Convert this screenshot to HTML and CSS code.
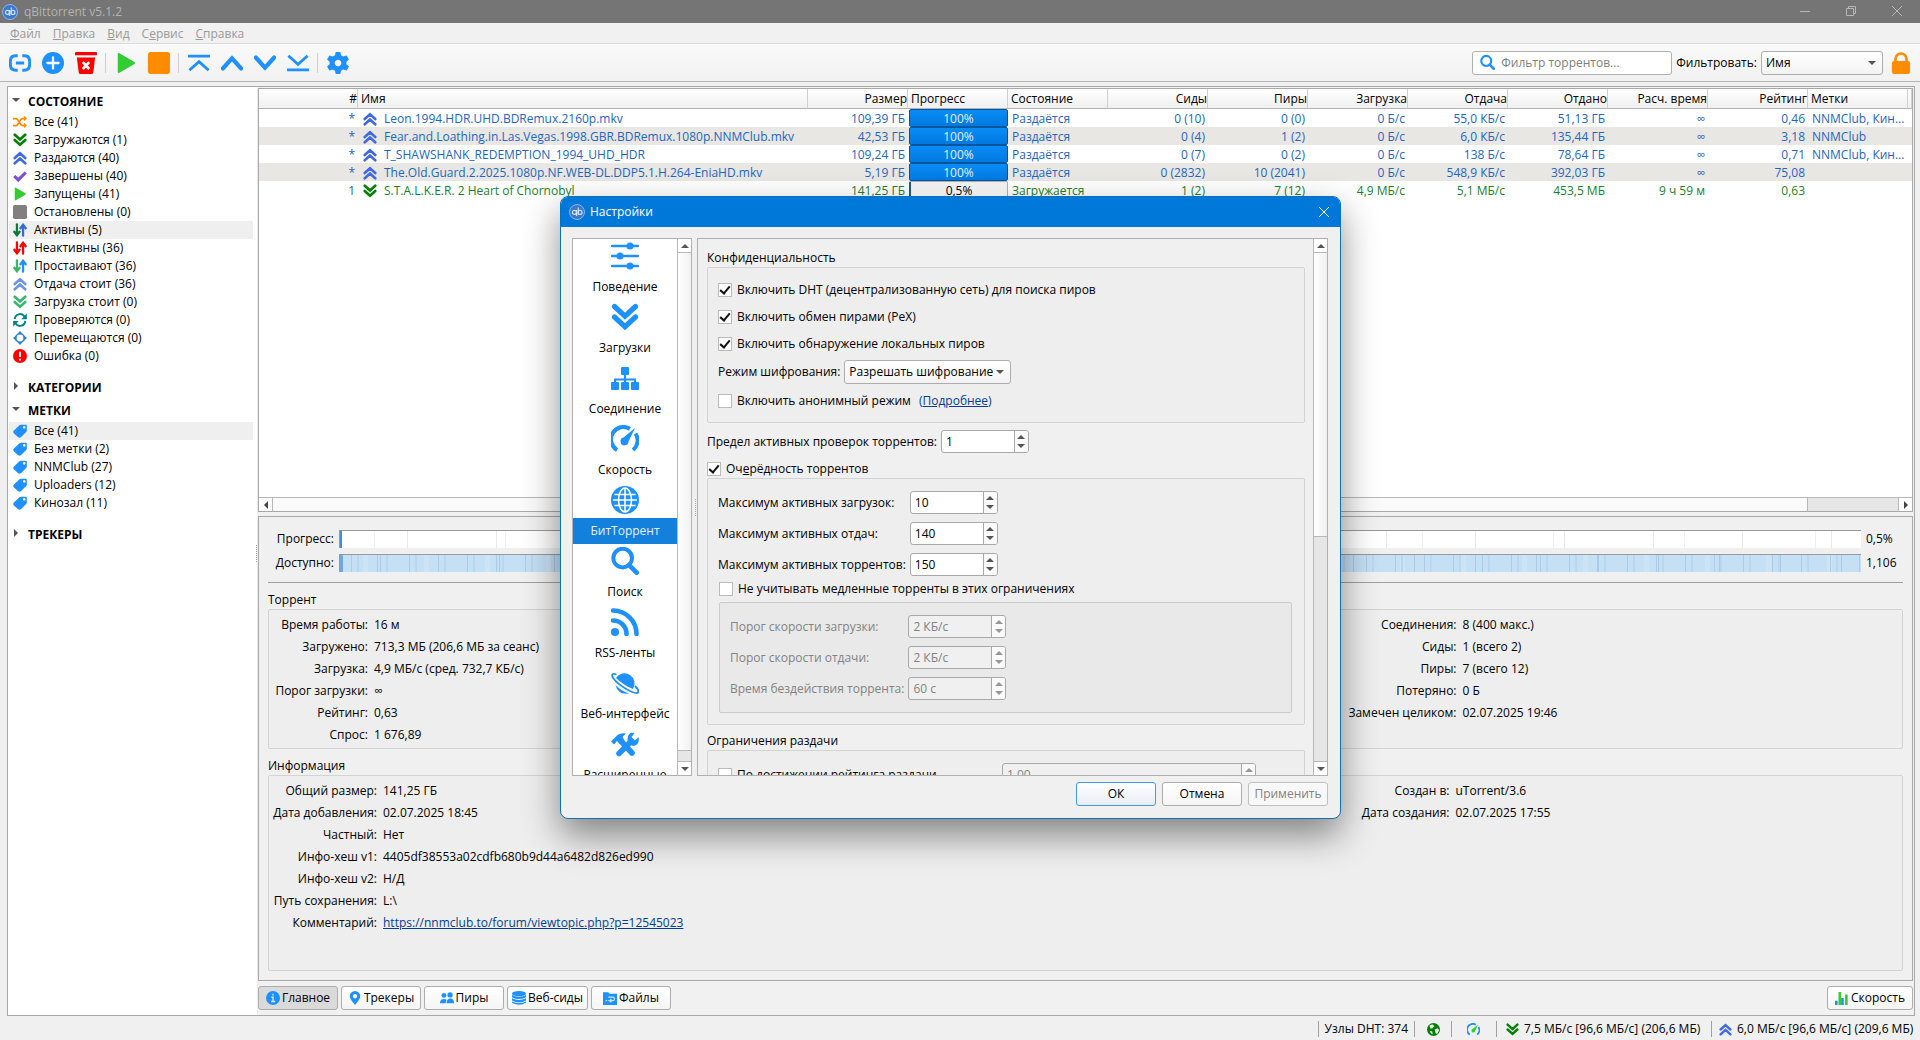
FILE: index.html
```html
<!DOCTYPE html>
<html lang="ru">
<head>
    <meta charset="UTF-8">
    <meta name="viewport" content="width=device-width, initial-scale=1.0">
    <title>qBittorrent v5.1.2</title>
    <link rel="stylesheet" href="styles.css">
</head>
<body>
    <!-- Icon sprite -->
    <svg class="sprite" aria-hidden="true">
        <symbol id="i-logo" viewBox="0 0 16 16"><circle cx="8" cy="8" r="7.5" fill="#3b78d0" stroke="#8fb6ea"/><circle cx="5.4" cy="8.4" r="2" fill="none" stroke="#cfe2fa" stroke-width="1.2"/><path d="M7.6 6v6M9.3 3.6v6.6" stroke="#cfe2fa" stroke-width="1.2"/><circle cx="11" cy="8.4" r="2" fill="none" stroke="#cfe2fa" stroke-width="1.2"/></symbol>
        <symbol id="i-up2" viewBox="0 0 16 16"><path d="M2 8l6-5.500 6 5.500M2 14l6-5.500 6 5.500" fill="none" stroke="currentColor" stroke-width="3" stroke-linecap="round"/></symbol>
        <symbol id="i-down2" viewBox="0 0 16 16"><path d="M2 2l6 5.500L14 2M2 8l6 5.500L14 8" fill="none" stroke="currentColor" stroke-width="3" stroke-linecap="round"/></symbol>
        <symbol id="i-play" viewBox="0 0 16 16"><path d="M2 1.500q0-1.200 1.200-.6l11 6.300q1 .8 0 1.600l-11 6.300Q2 15.700 2 14.500z" fill="#32cd32"/></symbol>
        <symbol id="i-stop" viewBox="0 0 16 16"><rect width="16" height="16" rx="2" fill="currentColor"/></symbol>
        <symbol id="i-check" viewBox="0 0 16 16"><path d="M1.500 8l4.500 4.500L14.500 4" fill="none" stroke="#7b52d3" stroke-width="3.600"/></symbol>
        <symbol id="i-shuffle" viewBox="0 0 16 16"><path d="M0 4h3.500c3 0 4 8 7.500 8h2M0 12h3.500c1.300 0 2.200-1.300 3-3M7.800 7C8.600 5.300 9.600 4 11 4h2" fill="none" stroke="#ff8c00" stroke-width="2"/><path d="M12.500.8L16 4l-3.500 3.200zM12.500 8.800L16 12l-3.500 3.200z" fill="#ff8c00"/></symbol>
        <symbol id="i-updown" viewBox="0 0 16 16"><path class="a" d="M4.500 1.500V13M1.500 10l3 4 3-4" fill="none" stroke-width="2.600" stroke-linecap="round"/><path class="b" d="M11.500 14.500V3M8.500 6l3-4 3 4" fill="none" stroke-width="2.600" stroke-linecap="round"/></symbol>
        <symbol id="i-sync" viewBox="0 0 16 16"><path d="M2 7a6 6 0 0 1 11-3M14 9a6 6 0 0 1-11 3" fill="none" stroke="#008080" stroke-width="2.200"/><path d="M15.800.5v6.500H9.500zM.2 15.500V9h6.300z" fill="#008080"/></symbol>
        <symbol id="i-move" viewBox="0 0 16 16"><circle cx="8" cy="8" r="4.800" fill="none" stroke="#2a7fd4" stroke-width="1.800"/><path d="M8 0l3 3.500H5zM8 16l-3-3.500h6zM0 8l3.500-3v6zM16 8l-3.500 3V5z" fill="#2a7fd4"/></symbol>
        <symbol id="i-error" viewBox="0 0 16 16"><circle cx="8" cy="8" r="8" fill="#f00"/><path d="M8 3.200v5.800M8 11v2.200" stroke="#fff" stroke-width="2.200"/></symbol>
        <symbol id="i-tag" viewBox="0 0 16 16"><path fill-rule="evenodd" d="M9 .8h5.800q1 0 1 1V7.500q0 1-1 2L9 15.200q-1.500 1-3 0L.8 10.500q-1-1.500 0-2.800L7 1.700q1-.9 2-.9zM12.800 2.400a1.500 1.500 0 1 0 .01 0z" fill="#1e90ff"/></symbol>
        <symbol id="i-link" viewBox="0 0 24 24"><path d="M9.500 4H7.500Q1.500 4 1.500 10v4q0 6 6 6h2M14.500 4h2q6 0 6 6v4q0 6-6 6h-2M7.500 12h9" fill="none" stroke="#1e90ff" stroke-width="3.200"/></symbol>
        <symbol id="i-plus" viewBox="0 0 24 24"><circle cx="12" cy="12" r="12" fill="#1e90ff"/><path d="M12 6v12M6 12h12" stroke="#fff" stroke-width="2.500" stroke-linecap="round"/></symbol>
        <symbol id="i-trash" viewBox="0 0 24 24"><path d="M1 0h22q1 0 1 1v2.500H0V1q0-1 1-1zM2 6h20l-2 16q-.3 2-2 2H6q-1.700 0-2-2z" fill="#f00"/><path d="M8.500 11l7 7.500M15.500 11l-7 7.500" stroke="#fff" stroke-width="3"/></symbol>
        <symbol id="i-top" viewBox="0 0 24 24"><path d="M0 4.500h24M1.500 20L12 10.500 22.500 20" fill="none" stroke="#1e90ff" stroke-width="3"/></symbol>
        <symbol id="i-up" viewBox="0 0 24 24"><path d="M2 18l10-11 10 11" fill="none" stroke="#1e90ff" stroke-width="4.500" stroke-linecap="round"/></symbol>
        <symbol id="i-down" viewBox="0 0 24 24"><path d="M2 6l10 11L22 6" fill="none" stroke="#1e90ff" stroke-width="4.500" stroke-linecap="round"/></symbol>
        <symbol id="i-bottom" viewBox="0 0 24 24"><path d="M0 19.500h24M1.500 4L12 13.500 22.500 4" fill="none" stroke="#1e90ff" stroke-width="3"/></symbol>
        <symbol id="i-gear" viewBox="0 0 24 24"><path fill-rule="evenodd" fill="#1e90ff" d="M9.500 0h5l.8 3.600 2.400 1.300 3.700-1.100 2.500 4.400-2.700 2.500v2.600l2.700 2.500-2.500 4.400-3.700-1.100-2.400 1.300-.8 3.600h-5l-.8-3.600-2.400-1.300-3.700 1.100L.1 15.800l2.700-2.500v-2.600L.1 8.200l2.500-4.400 3.700 1.100 2.400-1.300zM12 8.400a3.600 3.600 0 1 0 .01 0z"/></symbol>
        <symbol id="i-search" viewBox="0 0 24 24"><circle cx="10" cy="9.500" r="8" fill="none" stroke="#1e90ff" stroke-width="3.400"/><path d="M15.500 15.500l6.500 6.500" stroke="#1e90ff" stroke-width="4" stroke-linecap="round"/></symbol>
        <symbol id="i-lock" viewBox="0 0 20 22"><path d="M4.500 11V7a5.500 5.500 0 0 1 11 0v4" fill="none" stroke="#ff8c00" stroke-width="2.600"/><rect x="1" y="9" width="18" height="13" rx="2" fill="#ff8c00"/></symbol>
        <symbol id="i-sliders" viewBox="0 0 28 28"><path d="M1 4h26M1 14h26M1 24h26" stroke="#1e90ff" stroke-width="2.400" stroke-linecap="round"/><circle cx="19" cy="4" r="3.500" fill="#1e90ff"/><circle cx="9" cy="14" r="3.500" fill="#1e90ff"/><circle cx="19" cy="24" r="3.500" fill="#1e90ff"/></symbol>
        <symbol id="i-network" viewBox="0 0 28 28"><path d="M14 10v10M4 20v-4.500h20V20" fill="none" stroke="#1e90ff" stroke-width="2"/><g fill="#1e90ff"><rect x="10" y="3" width="8" height="8" rx="1"/><rect x="0" y="18" width="8" height="8" rx="1"/><rect x="10" y="18" width="8" height="8" rx="1"/><rect x="20" y="18" width="8" height="8" rx="1"/></g></symbol>
        <symbol id="i-gauge" viewBox="0 0 28 28"><path d="M6 25a12.300 12.300 0 0 1 13-21.200M24.500 8.500A12.300 12.300 0 0 1 22 25" fill="none" stroke="#1e90ff" stroke-width="4"/><path class="needle" d="M24 3l-6.500 13.500a4 4 0 1 1-5-4z"/></symbol>
        <symbol id="i-globe" viewBox="0 0 28 28"><circle cx="14" cy="14" r="14" fill="#1e90ff"/><path d="M14 2v24M2 14h24M3.500 8.500h21M3.500 19.500h21" stroke="#fff" stroke-width="1.600"/><ellipse cx="14" cy="14" rx="6.500" ry="12" fill="none" stroke="#fff" stroke-width="1.600"/></symbol>
        <symbol id="i-rss" viewBox="0 0 28 28"><circle cx="4" cy="24" r="4" fill="#1e90ff"/><path d="M2 12.500A13.500 13.500 0 0 1 15.500 26M2 2.500A23.500 23.500 0 0 1 25.500 26" fill="none" stroke="#1e90ff" stroke-width="4.600" stroke-linecap="round"/></symbol>
        <symbol id="i-planet" viewBox="0 0 28 28"><path d="M5 9a10 10 0 1 1 17 11Q12 16 5 9zM4.500 16Q11 22.500 18 24.500 7 26 4.500 16z" fill="#1e90ff"/><path d="M5.500 5.500C1 4 0 6 2.500 9.500 7 16 24 26.500 27 23.500c1-1-.5-4-3-6.500" fill="none" stroke="#1e90ff" stroke-width="1.800"/></symbol>
        <symbol id="i-tools" viewBox="0 0 28 28"><path d="M8 23.500L19.500 12M10 11l11 12" stroke="#1e90ff" stroke-width="5.600" stroke-linecap="round"/><path d="M0 11.500L6.500 5Q10 2.500 15 3.500L11.500 7l2 3.500-4 4L6 11l-3 3.500zM23.500 3Q17 2 16.500 8.500T23 16q6-2 4.500-9L24 10.500 20.500 7z" fill="#1e90ff"/></symbol>
        <symbol id="i-info" viewBox="0 0 16 16"><circle cx="8" cy="8" r="8" fill="#1e90ff"/><path d="M8 3v2.200M6 7h2v5M5.800 12h4.600" fill="none" stroke="#d9ecff" stroke-width="1.500"/></symbol>
        <symbol id="i-pin" viewBox="0 0 16 16"><path fill-rule="evenodd" d="M8 0a6 6 0 0 1 6 6q0 3-6 10Q2 9 2 6a6 6 0 0 1 6-6zm0 3.500a2.500 2.500 0 1 0 .01 0z" fill="#1e90ff"/></symbol>
        <symbol id="i-people" viewBox="0 0 16 16"><g fill="#1e90ff"><circle cx="4.500" cy="5" r="2.800"/><circle cx="11.500" cy="4.500" r="3"/><path d="M0 14q0-5 4.500-5 2 0 3 1.200Q6.500 12 6.500 14zM7.500 14q0-5.500 4.300-5.500T16 14z"/></g></symbol>
        <symbol id="i-db" viewBox="0 0 16 16"><ellipse cx="8" cy="3" rx="8" ry="3" fill="#1e90ff"/><path d="M0 4.500q8 4 16 0V7q-8 4.500-16 0zM0 8.300q8 4 16 0v2.500q-8 4.500-16 0zM0 12q8 4 16 0v1.500q-8 4.500-16 0z" fill="#1e90ff"/></symbol>
        <symbol id="i-folder" viewBox="0 0 16 16"><path d="M0 1.500h6L7.500 3H16v13H0z" fill="#1e90ff"/><path d="M6 7h5.500q1.500 0 1.500 2t-1.500 2H8M9.500 9L7.500 11l2 2M3 11h1.500M5.500 11h1" fill="none" stroke="#cfe6ff" stroke-width="1.300"/></symbol>
        <symbol id="i-chart" viewBox="0 0 16 16"><path d="M1.500 16v-5M8.500 16V8" stroke="#1e90ff" stroke-width="3"/><path d="M5.500 16V1M13 16V4" stroke="#32cd32" stroke-width="3"/></symbol>
        <symbol id="i-earth" viewBox="0 0 16 16"><circle cx="8" cy="8" r="8" fill="#008000"/><path d="M3 3.500q3-2 4.500-1.500L9 4 6.500 6.500 4.500 7zM9.500 8l3.500-1.500 2 2-2.500 5-2-1zM3.500 9.500l3 1 .5 3.500q-3-1-3.500-4.500z" fill="#eaf4ea"/></symbol>
    </svg>

    <header class="titlebar">
        <svg class="logo"><use href="#i-logo"/></svg>
        <h1>qBittorrent v5.1.2</h1>
        <div class="window-buttons">
            <button aria-label="Свернуть"><svg viewBox="0 0 10 10"><path d="M0 5.500h10"/></svg></button>
            <button aria-label="Восстановить"><svg viewBox="0 0 10 10"><path d="M.5 2.500h7v7h-7zM2.500 2.500v-2h7v7h-2"/></svg></button>
            <button aria-label="Закрыть"><svg viewBox="0 0 10 10"><path d="M0 0l10 10M10 0L0 10"/></svg></button>
        </div>
    </header>

    <nav class="menubar">
        <a href="#"><u>Ф</u>айл</a>
        <a href="#"><u>П</u>равка</a>
        <a href="#"><u>В</u>ид</a>
        <a href="#">С<u>е</u>рвис</a>
        <a href="#"><u>С</u>правка</a>
    </nav>

    <div class="toolbar">
        <button aria-label="Добавить ссылку"><svg><use href="#i-link"/></svg></button>
        <button aria-label="Добавить торрент"><svg><use href="#i-plus"/></svg></button>
        <button aria-label="Удалить"><svg><use href="#i-trash"/></svg></button>
        <span class="sep"></span>
        <button aria-label="Запустить"><svg><use href="#i-play"/></svg></button>
        <button aria-label="Остановить"><svg class="orange"><use href="#i-stop"/></svg></button>
        <span class="sep"></span>
        <button aria-label="В начало очереди"><svg><use href="#i-top"/></svg></button>
        <button aria-label="Вверх"><svg><use href="#i-up"/></svg></button>
        <button aria-label="Вниз"><svg><use href="#i-down"/></svg></button>
        <button aria-label="В конец очереди"><svg><use href="#i-bottom"/></svg></button>
        <span class="sep"></span>
        <button aria-label="Настройки"><svg><use href="#i-gear"/></svg></button>
        <div class="filter">
            <div class="search">
                <svg><use href="#i-search"/></svg>
                <input type="text" placeholder="Фильтр торрентов..." aria-label="Фильтр торрентов">
            </div>
            <label for="filterBy">Фильтровать:</label>
            <div class="combo filter-combo"><select id="filterBy"><option>Имя</option></select></div>
            <button class="lock" aria-label="Заблокировать"><svg><use href="#i-lock"/></svg></button>
        </div>
    </div>

    <main class="workspace">
        <aside class="sidebar">
            <h2 class="open">СОСТОЯНИЕ</h2>
            <ul>
                <li><svg><use href="#i-shuffle"/></svg>Все (41)</li>
                <li><svg class="green"><use href="#i-down2"/></svg>Загружаются (1)</li>
                <li><svg class="royal"><use href="#i-up2"/></svg>Раздаются (40)</li>
                <li><svg><use href="#i-check"/></svg>Завершены (40)</li>
                <li><svg><use href="#i-play"/></svg>Запущены (41)</li>
                <li><svg class="gray"><use href="#i-stop"/></svg>Остановлены (0)</li>
                <li class="selected"><svg class="ud-active"><use href="#i-updown"/></svg>Активны (5)</li>
                <li><svg class="ud-inactive"><use href="#i-updown"/></svg>Неактивны (36)</li>
                <li><svg class="ud-stalled"><use href="#i-updown"/></svg>Простаивают (36)</li>
                <li><svg class="soft-blue"><use href="#i-up2"/></svg>Отдача стоит (36)</li>
                <li><svg class="soft-green"><use href="#i-down2"/></svg>Загрузка стоит (0)</li>
                <li><svg><use href="#i-sync"/></svg>Проверяются (0)</li>
                <li><svg><use href="#i-move"/></svg>Перемещаются (0)</li>
                <li><svg><use href="#i-error"/></svg>Ошибка (0)</li>
            </ul>
            <h2>КАТЕГОРИИ</h2>
            <h2 class="open">МЕТКИ</h2>
            <ul>
                <li class="selected"><svg><use href="#i-tag"/></svg>Все (41)</li>
                <li><svg><use href="#i-tag"/></svg>Без метки (2)</li>
                <li><svg><use href="#i-tag"/></svg>NNMClub (27)</li>
                <li><svg><use href="#i-tag"/></svg>Uploaders (12)</li>
                <li><svg><use href="#i-tag"/></svg>Кинозал (11)</li>
            </ul>
            <h2>ТРЕКЕРЫ</h2>
        </aside>

        <section class="content">
            <div class="transfers">
                <div class="table-wrap">
                    <table>
                        <colgroup>
                            <col class="c-num"><col class="c-name"><col class="c"><col class="c"><col class="c"><col class="c"><col class="c"><col class="c"><col class="c"><col class="c"><col class="c"><col class="c"><col class="c"><col class="c-last">
                        </colgroup>
                        <thead>
                            <tr><th class="r">#</th><th>Имя</th><th class="r">Размер</th><th>Прогресс</th><th>Состояние</th><th class="r">Сиды</th><th class="r">Пиры</th><th class="r">Загрузка</th><th class="r">Отдача</th><th class="r">Отдано</th><th class="r">Расч. время</th><th class="r">Рейтинг</th><th>Метки</th><th></th></tr>
                        </thead>
                        <tbody>
                            <tr><td class="r">*</td><td class="name"><svg class="royal"><use href="#i-up2"/></svg>Leon.1994.HDR.UHD.BDRemux.2160p.mkv</td><td class="r">109,39 ГБ</td><td class="bar"><div>100%</div></td><td>Раздаётся</td><td class="r">0 (10)</td><td class="r">0 (0)</td><td class="r">0 Б/с</td><td class="r">55,0 КБ/с</td><td class="r">51,13 ГБ</td><td class="r">∞</td><td class="r">0,46</td><td>NNMClub, Кин...</td><td></td></tr>
                            <tr><td class="r">*</td><td class="name"><svg class="royal"><use href="#i-up2"/></svg>Fear.and.Loathing.in.Las.Vegas.1998.GBR.BDRemux.1080p.NNMClub.mkv</td><td class="r">42,53 ГБ</td><td class="bar"><div>100%</div></td><td>Раздаётся</td><td class="r">0 (4)</td><td class="r">1 (2)</td><td class="r">0 Б/с</td><td class="r">6,0 КБ/с</td><td class="r">135,44 ГБ</td><td class="r">∞</td><td class="r">3,18</td><td>NNMClub</td><td></td></tr>
                            <tr><td class="r">*</td><td class="name"><svg class="royal"><use href="#i-up2"/></svg>T_SHAWSHANK_REDEMPTION_1994_UHD_HDR</td><td class="r">109,24 ГБ</td><td class="bar"><div>100%</div></td><td>Раздаётся</td><td class="r">0 (7)</td><td class="r">0 (2)</td><td class="r">0 Б/с</td><td class="r">138 Б/с</td><td class="r">78,64 ГБ</td><td class="r">∞</td><td class="r">0,71</td><td>NNMClub, Кин...</td><td></td></tr>
                            <tr><td class="r">*</td><td class="name"><svg class="royal"><use href="#i-up2"/></svg>The.Old.Guard.2.2025.1080p.NF.WEB-DL.DDP5.1.H.264-EniaHD.mkv</td><td class="r">5,19 ГБ</td><td class="bar"><div>100%</div></td><td>Раздаётся</td><td class="r">0 (2832)</td><td class="r">10 (2041)</td><td class="r">0 Б/с</td><td class="r">548,9 КБ/с</td><td class="r">392,03 ГБ</td><td class="r">∞</td><td class="r">75,08</td><td></td><td></td></tr>
                            <tr class="downloading"><td class="r">1</td><td class="name"><svg class="green"><use href="#i-down2"/></svg>S.T.A.L.K.E.R. 2 Heart of Chornobyl</td><td class="r">141,25 ГБ</td><td class="bar started"><div>0,5%</div></td><td>Загружается</td><td class="r">1 (2)</td><td class="r">7 (12)</td><td class="r">4,9 МБ/с</td><td class="r">5,1 МБ/с</td><td class="r">453,5 МБ</td><td class="r">9 ч 59 м</td><td class="r">0,63</td><td></td><td></td></tr>
                        </tbody>
                    </table>
                </div>
                <div class="hscroll">
                    <button class="arrow left" aria-label="Влево"></button>
                    <div class="track"><div class="thumb"></div></div>
                    <button class="arrow right" aria-label="Вправо"></button>
                </div>
            </div>

            <div class="details">
                <div class="pieces">
                    <span class="label">Прогресс:</span><div class="strip progress"></div><span>0,5%</span>
                    <span class="label">Доступно:</span><div class="strip avail"></div><span>1,106</span>
                </div>
                <h3>Торрент</h3>
                <div class="panel torrent">
                    <dl>
                        <dt>Время работы:</dt><dd>16 м</dd>
                        <dt>Загружено:</dt><dd>713,3 МБ (206,6 МБ за сеанс)</dd>
                        <dt>Загрузка:</dt><dd>4,9 МБ/с (сред. 732,7 КБ/с)</dd>
                        <dt>Порог загрузки:</dt><dd>∞</dd>
                        <dt>Рейтинг:</dt><dd>0,63</dd>
                        <dt>Спрос:</dt><dd>1 676,89</dd>
                    </dl>
                    <dl class="far">
                        <dt>Соединения:</dt><dd>8 (400 макс.)</dd>
                        <dt>Сиды:</dt><dd>1 (всего 2)</dd>
                        <dt>Пиры:</dt><dd>7 (всего 12)</dd>
                        <dt>Потеряно:</dt><dd>0 Б</dd>
                        <dt>Замечен целиком:</dt><dd>02.07.2025 19:46</dd>
                    </dl>
                </div>
                <h3>Информация</h3>
                <div class="panel info">
                    <dl>
                        <dt>Общий размер:</dt><dd>141,25 ГБ</dd>
                        <dt>Дата добавления:</dt><dd>02.07.2025 18:45</dd>
                        <dt>Частный:</dt><dd>Нет</dd>
                        <dt>Инфо-хеш v1:</dt><dd>4405df38553a02cdfb680b9d44a6482d826ed990</dd>
                        <dt>Инфо-хеш v2:</dt><dd>Н/Д</dd>
                        <dt>Путь сохранения:</dt><dd>L:\</dd>
                        <dt>Комментарий:</dt><dd><a href="#">https://nnmclub.to/forum/viewtopic.php?p=12545023</a></dd>
                    </dl>
                    <dl class="far">
                        <dt>Создан в:</dt><dd>uTorrent/3.6</dd>
                        <dt>Дата создания:</dt><dd>02.07.2025 17:55</dd>
                    </dl>
                </div>
            </div>

            <div class="tabs">
                <button class="btn active"><svg><use href="#i-info"/></svg>Главное</button>
                <button class="btn"><svg><use href="#i-pin"/></svg>Трекеры</button>
                <button class="btn"><svg><use href="#i-people"/></svg>Пиры</button>
                <button class="btn"><svg><use href="#i-db"/></svg>Веб-сиды</button>
                <button class="btn"><svg><use href="#i-folder"/></svg>Файлы</button>
                <button class="btn speed"><svg><use href="#i-chart"/></svg>Скорость</button>
            </div>
        </section>
    </main>

    <footer class="statusbar">
        <span>Узлы DHT: 374</span>
        <span class="icon-only"><svg><use href="#i-earth"/></svg></span>
        <span class="icon-only wide"><svg class="needle-green"><use href="#i-gauge"/></svg></span>
        <span class="rate"><svg class="green"><use href="#i-down2"/></svg>7,5 МБ/с [96,6 МБ/с] (206,6 МБ)</span>
        <span class="rate last"><svg class="royal"><use href="#i-up2"/></svg>6,0 МБ/с [96,6 МБ/с] (209,6 МБ)</span>
    </footer>

    <!-- Settings window -->
    <div class="dialog" role="dialog" aria-labelledby="dlgTitle">
        <div class="dialog-title">
            <svg class="logo"><use href="#i-logo"/></svg>
            <h2 id="dlgTitle">Настройки</h2>
            <button aria-label="Закрыть"><svg viewBox="0 0 10 10"><path d="M0 0l10 10M10 0L0 10"/></svg></button>
        </div>
        <div class="dialog-body">
            <div class="pages">
                <ul>
                    <li><svg><use href="#i-sliders"/></svg><span>Поведение</span></li>
                    <li><svg class="blue"><use href="#i-down2"/></svg><span>Загрузки</span></li>
                    <li><svg><use href="#i-network"/></svg><span>Соединение</span></li>
                    <li><svg><use href="#i-gauge"/></svg><span>Скорость</span></li>
                    <li class="current"><svg><use href="#i-globe"/></svg><span>БитТоррент</span></li>
                    <li><svg><use href="#i-search"/></svg><span>Поиск</span></li>
                    <li><svg><use href="#i-rss"/></svg><span>RSS-ленты</span></li>
                    <li><svg><use href="#i-planet"/></svg><span>Веб-интерфейс</span></li>
                    <li><svg><use href="#i-tools"/></svg><span>Расширенные</span></li>
                </ul>
                <div class="vscroll">
                    <button class="arrow up" aria-label="Вверх"></button>
                    <div class="track"><div class="thumb long"></div></div>
                    <button class="arrow down" aria-label="Вниз"></button>
                </div>
            </div>

            <div class="page">
                <form>
                    <h3>Конфиденциальность</h3>
                    <div class="group privacy">
                        <label class="check"><input type="checkbox" checked>Включить DHT (децентрализованную сеть) для поиска пиров</label>
                        <label class="check"><input type="checkbox" checked>Включить обмен пирами (PeX)</label>
                        <label class="check"><input type="checkbox" checked>Включить обнаружение локальных пиров</label>
                        <div class="field encryption">
                            <label for="enc">Режим шифрования:</label>
                            <div class="combo"><select id="enc"><option>Разрешать шифрование</option></select></div>
                        </div>
                        <div class="field anonymous">
                            <label class="check"><input type="checkbox">Включить анонимный режим</label>
                            <a href="#">(<u>Подробнее</u>)</a>
                        </div>
                    </div>
                    <div class="field checks-limit">
                        <label for="checks">Предел активных проверок торрентов:</label>
                        <div class="spin"><input type="text" id="checks" value="1"><span><button type="button" aria-label="Больше"></button><button type="button" aria-label="Меньше"></button></span></div>
                    </div>
                    <label class="check queue"><input type="checkbox" checked><span>Оч<u>е</u>рёдность торрентов</span></label>
                    <div class="group queueing">
                        <div class="rows">
                            <label for="maxDl">Максимум активных загрузок:</label>
                            <div class="spin"><input type="text" id="maxDl" value="10"><span><button type="button" aria-label="Больше"></button><button type="button" aria-label="Меньше"></button></span></div>
                            <label for="maxUp">Максимум активных отдач:</label>
                            <div class="spin"><input type="text" id="maxUp" value="140"><span><button type="button" aria-label="Больше"></button><button type="button" aria-label="Меньше"></button></span></div>
                            <label for="maxAll">Максимум активных торрентов:</label>
                            <div class="spin"><input type="text" id="maxAll" value="150"><span><button type="button" aria-label="Больше"></button><button type="button" aria-label="Меньше"></button></span></div>
                        </div>
                        <label class="check slow"><input type="checkbox">Не учитывать медленные торренты в этих ограничениях</label>
                        <div class="group rows disabled">
                            <label for="thDl">Порог скорости загрузки:</label>
                            <div class="spin"><input type="text" id="thDl" value="2 КБ/с" disabled><span><button type="button" disabled aria-label="Больше"></button><button type="button" disabled aria-label="Меньше"></button></span></div>
                            <label for="thUp">Порог скорости отдачи:</label>
                            <div class="spin"><input type="text" id="thUp" value="2 КБ/с" disabled><span><button type="button" disabled aria-label="Больше"></button><button type="button" disabled aria-label="Меньше"></button></span></div>
                            <label for="idle">Время бездействия торрента:</label>
                            <div class="spin"><input type="text" id="idle" value="60 с" disabled><span><button type="button" disabled aria-label="Больше"></button><button type="button" disabled aria-label="Меньше"></button></span></div>
                        </div>
                    </div>
                    <h3 class="limits-title">Ограничения раздачи</h3>
                    <div class="group limits">
                        <label class="check"><input type="checkbox">По достижении рейтинга раздачи</label>
                        <div class="spin disabled"><input type="text" value="1,00" disabled aria-label="Рейтинг раздачи"><span><button type="button" disabled aria-label="Больше"></button><button type="button" disabled aria-label="Меньше"></button></span></div>
                    </div>
                </form>
                <div class="vscroll">
                    <button class="arrow up" aria-label="Вверх"></button>
                    <div class="track"><div class="thumb half"></div></div>
                    <button class="arrow down" aria-label="Вниз"></button>
                </div>
            </div>
        </div>
        <div class="dialog-actions">
            <button class="btn default">ОК</button>
            <button class="btn">Отмена</button>
            <button class="btn" disabled>Применить</button>
        </div>
    </div>
</body>
</html>
```
FILE: styles.css
```css
* {
    box-sizing: border-box;
}
body {
    margin: 0;
    height: 100vh;
    display: flex;
    flex-direction: column;
    overflow: hidden;
    font: 12px/18px "Open Sans", "Noto Sans", sans-serif;
    color: #000;
    background: #f0f0f0;
}
h1, h2, h3, ul, dl, dd {
    margin: 0;
    padding: 0;
    font-size: 12px;
    font-weight: normal;
    list-style: none;
}
button, input, select {
    font: inherit;
    color: inherit;
    margin: 0;
}
button {
    padding: 0;
    border: 0;
    background: none;
}
a {
    color: #003e92;
}
.sprite {
    position: absolute;
    width: 0;
    height: 0;
}
.green { color: #008000; }
.royal { color: #4169e1; }
.gray { color: #808080; }
.orange { color: #ff8c00; }
.blue { color: #1e90ff; }
.soft-blue { color: #6f93e6; }
.soft-green { color: #3cb371; }
.ud-active { --a: #0b7a3e; --b: #3a68d8; }
.ud-inactive { --a: #f00; --b: #f00; }
.ud-stalled { --a: #3cb371; --b: #1e90ff; }
symbol .a { stroke: var(--a); }
symbol .b { stroke: var(--b); }
.needle { fill: var(--needle, #1e90ff); }
.needle-green { --needle: #32cd32; }

/* Title and menu */
.titlebar {
    display: flex;
    flex: none;
    align-items: center;
    height: 23px;
    padding-left: 2px;
    background: #757575;
    color: #b4b4b4;
}
.logo {
    width: 16px;
    height: 16px;
    margin-right: 6px;
}
.window-buttons {
    margin-left: auto;
    display: flex;
}
.window-buttons button {
    width: 46px;
    height: 22px;
}
.window-buttons svg, .dialog-title button svg {
    width: 10px;
    height: 10px;
    fill: none;
    stroke: #b8b8b8;
}
.menubar {
    display: flex;
    flex: none;
    gap: 12px;
    height: 21px;
    padding: 2px 10px;
    background: #f1f1f1;
    border-bottom: 1px solid #dcdcdc;
}
.menubar a {
    color: #9a9a9a;
    text-decoration: none;
}

/* Toolbar */
.toolbar {
    display: flex;
    flex: none;
    align-items: center;
    height: 38px;
    padding: 0 9px 0 3px;
    background: linear-gradient(#fafafa, #f1f1f1);
    border-bottom: 1px solid #b4b4b4;
}
.toolbar > button {
    width: 33px;
    height: 33px;
}
.toolbar > button svg {
    display: block;
    width: 22px;
    height: 22px;
    margin: auto;
}
.sep {
    width: 1px;
    height: 20px;
    margin: 0 3px;
    background: #cfcfcf;
}
.filter {
    display: flex;
    align-items: center;
    gap: 4px;
    margin-left: auto;
}
.search {
    display: flex;
    align-items: center;
    gap: 6px;
    width: 200px;
    height: 24px;
    padding: 0 7px;
    background: #fff;
    border: 1px solid #b0b0b0;
    border-radius: 3px;
}
.search svg {
    flex: none;
    width: 15px;
    height: 15px;
}
.search input {
    width: 100%;
    padding: 0;
    border: 0;
    outline: 0;
}
.search input::placeholder {
    color: #808080;
}
.combo {
    position: relative;
    height: 24px;
}
.combo select {
    width: 100%;
    height: 100%;
    padding: 0 4px;
    border: 1px solid #adadad;
    border-radius: 3px;
    background: linear-gradient(#fff, #f3f3f3);
    appearance: none;
}
.combo::after {
    content: "";
    position: absolute;
    right: 7px;
    top: 10px;
    border: 4px solid transparent;
    border-top-color: #555;
    border-bottom: 0;
}
.filter-combo {
    width: 122px;
    margin-right: 4px;
}
.lock svg {
    display: block;
    width: 20px;
    height: 24px;
}

/* Main area */
.workspace {
    flex: 1;
    display: flex;
    min-height: 0;
    margin: 4px 5px 0 7px;
    border: 1px solid #a8a8a8;
    background: #f1f1f1;
}
.sidebar {
    position: relative;
    width: 250px;
    flex: none;
    padding: 3px 4px 0 1px;
    background: #fff;
    border-right: 1px solid #ececec;
}
/* Splitter grip */
.sidebar::after, .pages::after {
    content: "";
    position: absolute;
    right: 0;
    top: 458px;
    height: 17px;
    border-right: 1px dotted #aaa;
}
.sidebar h2 {
    position: relative;
    height: 23px;
    padding-left: 19px;
    line-height: 23px;
    font-weight: bold;
}
.sidebar ul + h2 {
    margin-top: 11px;
}
.sidebar h2::before {
    content: "";
    position: absolute;
    left: 5px;
    top: 6px;
    border: 4px solid transparent;
    border-left-color: #555;
    border-right: 0;
}
.sidebar h2.open::before {
    left: 3px;
    top: 8px;
    border: 4px solid transparent;
    border-top-color: #555;
    border-bottom: 0;
}
.sidebar li {
    display: flex;
    align-items: center;
    gap: 7px;
    height: 18px;
    padding-left: 4px;
}
.sidebar li svg {
    width: 14px;
    height: 14px;
}
.selected {
    background: #efefef;
}
.content {
    flex: 1;
    display: flex;
    flex-direction: column;
    min-width: 0;
    padding-right: 1px;
}
.transfers {
    flex: 1;
    display: flex;
    flex-direction: column;
    min-height: 0;
    margin-top: 1px;
    border: 1px solid #a8a8a8;
    background: #fff;
}
.table-wrap {
    flex: 1;
    overflow: hidden;
}
table {
    width: 100%;
    table-layout: fixed;
    border-collapse: separate;
    border-spacing: 0;
    color: #1e66c0;
}
.c-num { width: 99px; }
.c { width: 100px; }
.c-last { width: 4px; }
th {
    height: 20px;
    padding: 1px 0 0 3px;
    font-weight: normal;
    text-align: left;
    color: #000;
    background: linear-gradient(#fff, #f0f0f0);
    border-right: 1px solid #d0d0d0;
    border-bottom: 1px solid #b4b4b4;
}
td {
    height: 18px;
    padding: 0 0 0 4px;
    line-height: 17px;
    overflow: hidden;
    white-space: nowrap;
}
.r {
    text-align: right;
}
td.r {
    padding-right: 3px;
}
tbody tr:nth-child(even) {
    background: #e9e7e3;
}
.downloading {
    color: #1b7f2e;
}
.name svg {
    width: 14px;
    height: 14px;
    margin: 0 7px 0 1px;
    vertical-align: -3px;
}
td.bar {
    padding: 0 0 0 1px;
}
.bar div {
    height: 18px;
    text-align: center;
    color: #e4f1ff;
    background: linear-gradient(#0a8cf5, #0079e0);
    border: 1px solid #00559f;
    border-radius: 2px;
}
.bar.started div {
    color: #000;
    background: linear-gradient(#f2f2f2, #fff);
    border-color: #b0b0b0;
    border-left: 2px solid #1b5a94;
}

/* Scroll bars */
.hscroll, .vscroll {
    display: flex;
    flex: none;
    background: #e6e6e6;
}
.hscroll {
    height: 14px;
    border-top: 1px solid #b8b8b8;
}
.vscroll {
    flex-direction: column;
    width: 14px;
    border-left: 1px solid #b8b8b8;
}
.track {
    flex: 1;
    min-height: 0;
}
.hscroll .thumb {
    width: calc(100% - 90px);
    height: 100%;
    background: #fafafa;
    border-right: 1px solid #b8b8b8;
}
.vscroll .thumb {
    background: linear-gradient(90deg, #fff, #f1f1f1);
    border-bottom: 1px solid #b8b8b8;
}
.thumb.long { height: 98%; }
.thumb.half { height: 56%; }
.arrow {
    display: grid;
    place-items: center;
    background: #fff;
}
.hscroll .arrow {
    width: 14px;
}
.vscroll .arrow {
    height: 14px;
}
.arrow::before {
    content: "";
    border: 4px solid transparent;
}
.left { border-right: 1px solid #b8b8b8; }
.right { border-left: 1px solid #b8b8b8; }
.up { border-bottom: 1px solid #b8b8b8; }
.down { border-top: 1px solid #b8b8b8; }
.left::before { border-right-color: #444; border-left: 0; }
.right::before { border-left-color: #444; border-right: 0; }
.up::before { border-bottom-color: #555; border-top: 0; }
.down::before { border-top-color: #555; border-bottom: 0; }

/* Details */
.details {
    height: 465px;
    flex: none;
    margin-top: 4px;
    padding: 13px 9px 0;
    background: #f0f0f0;
    border: 1px solid #a8a8a8;
}
.pieces {
    display: grid;
    grid-template-columns: 66px 1fr 37px;
    column-gap: 5px;
    row-gap: 6px;
    align-items: center;
    padding-bottom: 10px;
    border-bottom: 1px solid #a0a0a0;
}
.pieces .label {
    text-align: right;
}
.strip {
    height: 18px;
    border-top: 1px solid #999;
    border-left: 1px solid #999;
}
.progress {
    background:
        linear-gradient(90deg, #3c8fdb 2px, transparent 2px),
        repeating-linear-gradient(90deg, transparent 0 67px, #e6eaec 67px 68px, transparent 68px 89px),
        repeating-linear-gradient(90deg, transparent 0 34px, #eef1f3 34px 35px, transparent 35px 131px),
        #fff;
}
.avail {
    background:
        linear-gradient(90deg, #6fa8dc 3px, transparent 3px),
        repeating-linear-gradient(90deg, transparent 0 11px, #a9cdec 11px 12px, transparent 12px 17px, #b8d7f0 17px 19px, transparent 19px 29px),
        repeating-linear-gradient(90deg, transparent 0 23px, #cde4f7 23px 28px, transparent 28px 37px, #a8cbe9 37px 38px, transparent 38px 61px),
        #c5dff4;
}
.details h3 {
    height: 26px;
    padding-top: 8px;
}
.panel {
    display: grid;
    grid-template-columns: 50% 50%;
    padding-top: 4px;
    background: #eee;
    border: 1px solid #d3d3d3;
    border-radius: 2px;
}
.torrent {
    height: 140px;
}
.info {
    height: 196px;
}
.panel dl {
    display: grid;
    grid-template-columns: 99px 1fr;
    align-content: start;
    column-gap: 6px;
    line-height: 22px;
}
.panel dt {
    text-align: right;
    white-space: nowrap;
}
.panel dd {
    white-space: nowrap;
}
.torrent dl.far {
    grid-template-columns: 371px 1fr;
}
.info dl {
    grid-template-columns: 108px 1fr;
}
.info dl.far {
    grid-template-columns: 364px 1fr;
}
.tabs {
    display: flex;
    gap: 3px;
    padding: 5px 0;
}
.btn {
    display: inline-flex;
    align-items: center;
    justify-content: center;
    gap: 2px;
    min-width: 80px;
    height: 24px;
    padding: 0 4px;
    border: 1px solid #adadad;
    border-radius: 3px;
    background: linear-gradient(#fff, #f5f5f5);
}
.btn svg {
    width: 14px;
    height: 14px;
}
.btn.active {
    background: #dadada;
}
.btn.default {
    border-color: #3f9be8;
    background: linear-gradient(#fff, #e9edf7);
}
.btn:disabled {
    color: #838383;
    border-color: #c0c0c0;
    background: #f8f8f8;
}
.btn.speed {
    margin-left: auto;
    padding: 0 7px;
}

/* Status bar */
.statusbar {
    flex: none;
    display: flex;
    justify-content: flex-end;
    align-items: center;
    height: 24px;
    padding: 2px 6px 0 0;
}
.statusbar span {
    display: flex;
    align-items: center;
    height: 16px;
    padding: 0 6px;
    border-left: 1px solid #a0a0a0;
}
.statusbar svg {
    flex: none;
    width: 13px;
    height: 13px;
}
.statusbar .icon-only {
    width: 37px;
    padding-left: 12px;
}
.statusbar .wide {
    width: 45px;
    padding-left: 15px;
}
.statusbar .rate {
    gap: 5px;
    width: 215px;
    padding: 0 0 0 9px;
    white-space: nowrap;
}
.statusbar .last {
    width: 203px;
    padding-left: 7px;
}

/* Settings window */
.dialog {
    position: absolute;
    left: 560px;
    top: 196px;
    width: 781px;
    height: 623px;
    display: flex;
    flex-direction: column;
    background: #f0f0f0;
    border: 1px solid #0f70b8;
    border-radius: 8px;
    box-shadow: 0 16px 36px rgba(0, 0, 0, 0.45);
    overflow: hidden;
}
.dialog-title {
    flex: none;
    display: flex;
    align-items: center;
    height: 30px;
    padding: 0 11px 0 8px;
    color: #fff;
    background: #0078d9;
}
.dialog-title .logo {
    margin-right: 5px;
}
.dialog-title button {
    margin-left: auto;
}
.dialog-title button svg {
    display: block;
    stroke: #fff;
}
.dialog-body {
    flex: 1;
    display: flex;
    gap: 5px;
    min-height: 0;
    padding: 11px 12px 0 11px;
}
.pages {
    display: flex;
    position: relative;
    width: 120px;
    background: #fff;
    border: 1px solid #b0b0b0;
}
.pages::after {
    right: -5px;
    top: 260px;
}
.pages ul {
    flex: 1;
    overflow: hidden;
}
.pages li {
    display: flex;
    flex-direction: column;
    justify-content: space-between;
    align-items: center;
    height: 61px;
    padding-top: 3px;
}
.pages li svg {
    width: 28px;
    height: 28px;
}
.pages li span {
    width: 100%;
    height: 26px;
    line-height: 26px;
    text-align: center;
    white-space: nowrap;
}
.current span {
    color: #e4f1ff;
    background: #1380dc;
}
.page {
    flex: 1;
    display: flex;
    border: 1px solid #b0b0b0;
    overflow: hidden;
}
form {
    flex: 1;
    padding: 10px 8px 0 9px;
}
.page h3 {
    height: 18px;
}
.group {
    background: #eee;
    border: 1px solid #d3d3d3;
    border-radius: 2px;
}
.privacy {
    height: 156px;
    padding: 8px 10px 0;
}
.check {
    display: flex;
    align-items: center;
    gap: 5px;
}
.check input {
    flex: none;
    width: 14px;
    height: 14px;
    border: 1px solid #bbb;
    background: #fff;
    appearance: none;
    display: grid;
    place-items: center;
}
.check input:checked::before {
    content: "";
    width: 4px;
    height: 8px;
    margin-bottom: 2px;
    border: solid #111;
    border-width: 0 2px 2px 0;
    transform: rotate(40deg);
}
.privacy > .check {
    height: 27px;
}
.field {
    display: flex;
    align-items: center;
    gap: 4px;
}
.encryption .combo {
    width: 167px;
}
.encryption {
    height: 24px;
    margin-top: 3px;
}
.anonymous {
    height: 34px;
    gap: 8px;
}
.anonymous a {
    text-decoration: none;
}
.checks-limit {
    height: 37px;
}
.spin {
    display: flex;
    width: 88px;
    height: 23px;
    background: #fff;
    border: 1px solid #a8a8a8;
    border-radius: 3px;
    overflow: hidden;
}
.spin input {
    flex: 1;
    min-width: 0;
    padding: 0 4px;
    border: 0;
    background: none;
}
.spin span {
    flex: none;
    width: 14px;
    display: flex;
    flex-direction: column;
    justify-content: center;
    gap: 1px;
    background: #fafafa;
    border-left: 1px solid #a8a8a8;
}
.spin button {
    display: grid;
    place-items: center;
    height: 8px;
}
.spin button::before {
    content: "";
    border: 4px solid transparent;
    border-bottom-color: #555;
    border-top: 0;
}
.spin button + button::before {
    border: 4px solid transparent;
    border-top-color: #555;
    border-bottom: 0;
}
.queue {
    height: 18px;
}
.queueing {
    height: 247px;
    padding: 12px 12px 0 10px;
}
.rows {
    display: grid;
    grid-template-columns: max-content 1fr;
    column-gap: 4px;
    row-gap: 8px;
    align-items: center;
    white-space: nowrap;
}
.slow {
    height: 26px;
    padding-left: 1px;
}
.group.disabled {
    height: 111px;
    margin-left: 1px;
    padding: 0 10px;
    align-content: center;
    color: #838383;
    background: #e9e9e9;
    border-color: #ccc;
}
.disabled .spin {
    width: 98px;
}
.disabled .spin, .spin.disabled {
    color: #838383;
    background: #f0f0f0;
}
.spin button:disabled::before {
    opacity: 0.6;
}
.page .limits-title {
    height: 25px;
    padding-top: 7px;
}
.limits {
    display: flex;
    justify-content: space-between;
    height: 60px;
    padding: 12px 48px 0 10px;
}
.limits .check {
    height: 23px;
}
.limits .spin {
    width: 254px;
}
.dialog-actions {
    flex: none;
    display: flex;
    justify-content: flex-end;
    gap: 6px;
    height: 42px;
    padding: 6px 12px 0;
}
```
